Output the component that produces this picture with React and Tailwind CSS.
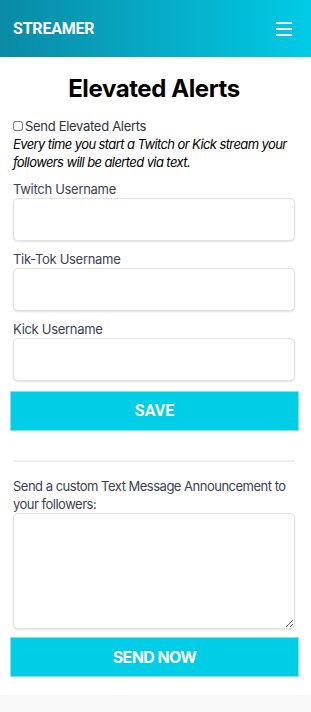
import React from 'react';

function Field({ label }) {
    return (
        <div className="mt-[9px]">
            <label className="block text-[13px] leading-[18px] text-[#3b4252] tracking-[-0.3px]">{label}</label>
            <input
                type="text"
                className="block w-full h-[43px] rounded-[5px] border border-[#e3e3e3] bg-white shadow-[0_1px_2px_rgba(0,0,0,0.12)] outline-none"
            />
        </div>
    );
}

function App() {
    return (
        <div className="min-h-[712px] bg-white font-['Inter',sans-serif] flex flex-col">
            {/* Header */}
            <div className="h-[57px] flex items-center justify-between px-[13px] bg-gradient-to-r from-[#0a8aa5] to-[#00cbe6]">
                <span className="text-white text-[16px] font-bold font-['Roboto',sans-serif] tracking-[-0.2px]">STREAMER</span>
                <div className="flex flex-col gap-[4px] mr-[6px]">
                    <span className="block w-[16px] h-[2px] bg-white"></span>
                    <span className="block w-[16px] h-[2px] bg-white"></span>
                    <span className="block w-[16px] h-[2px] bg-white"></span>
                </div>
            </div>

            <div className="flex-1 pl-[13px] pr-[16px]">
                <h1 className="text-center text-[24px] font-bold text-black mt-[17px] leading-[30px] tracking-[-0.4px]">Elevated Alerts</h1>

                <div className="mt-[13px] flex items-center gap-[2px] text-[13px] leading-[18px] text-[#2d3340] tracking-[-0.3px]">
                    <input type="checkbox" className="w-[10px] h-[10px] m-0" />
                    <span>Send Elevated Alerts</span>
                </div>
                <p className="italic text-[13px] leading-[18px] text-black tracking-[-0.6px] -mr-[6px]">
                    Every time you start a Twitch or Kick stream your followers will be alerted via text.
                </p>

                <Field label="Twitch Username" />
                <Field label="Tik-Tok Username" />
                <Field label="Kick Username" />

                <button className="-ml-[3px] mt-[10px] w-[calc(100%+7px)] h-[40px] bg-[#00cde6] border border-[#7fe4f2] text-white font-bold text-[16px] font-['Roboto',sans-serif]">
                    SAVE
                </button>

                <div className="mt-[29px] border-t-2 border-[#f1f1f1]"></div>

                <p className="mt-[15px] text-[13px] leading-[18px] text-[#3b4252] tracking-[-0.5px] -mr-[6px]">
                    Send a custom Text Message Announcement to your followers:
                </p>
                <textarea className="block w-full h-[116px] rounded-[5px] border border-[#e3e3e3] bg-white shadow-[0_1px_2px_rgba(0,0,0,0.12)] outline-none"></textarea>

                <button className="-ml-[3px] mt-[8px] w-[calc(100%+7px)] h-[40px] bg-[#00cde6] border border-[#7fe4f2] text-white font-bold text-[16px] tracking-[-0.6px]">
                    SEND NOW
                </button>
            </div>

            <div className="h-[18px] mt-[18px] bg-[#f9f9f9]"></div>
        </div>
    );
}

export default App;
